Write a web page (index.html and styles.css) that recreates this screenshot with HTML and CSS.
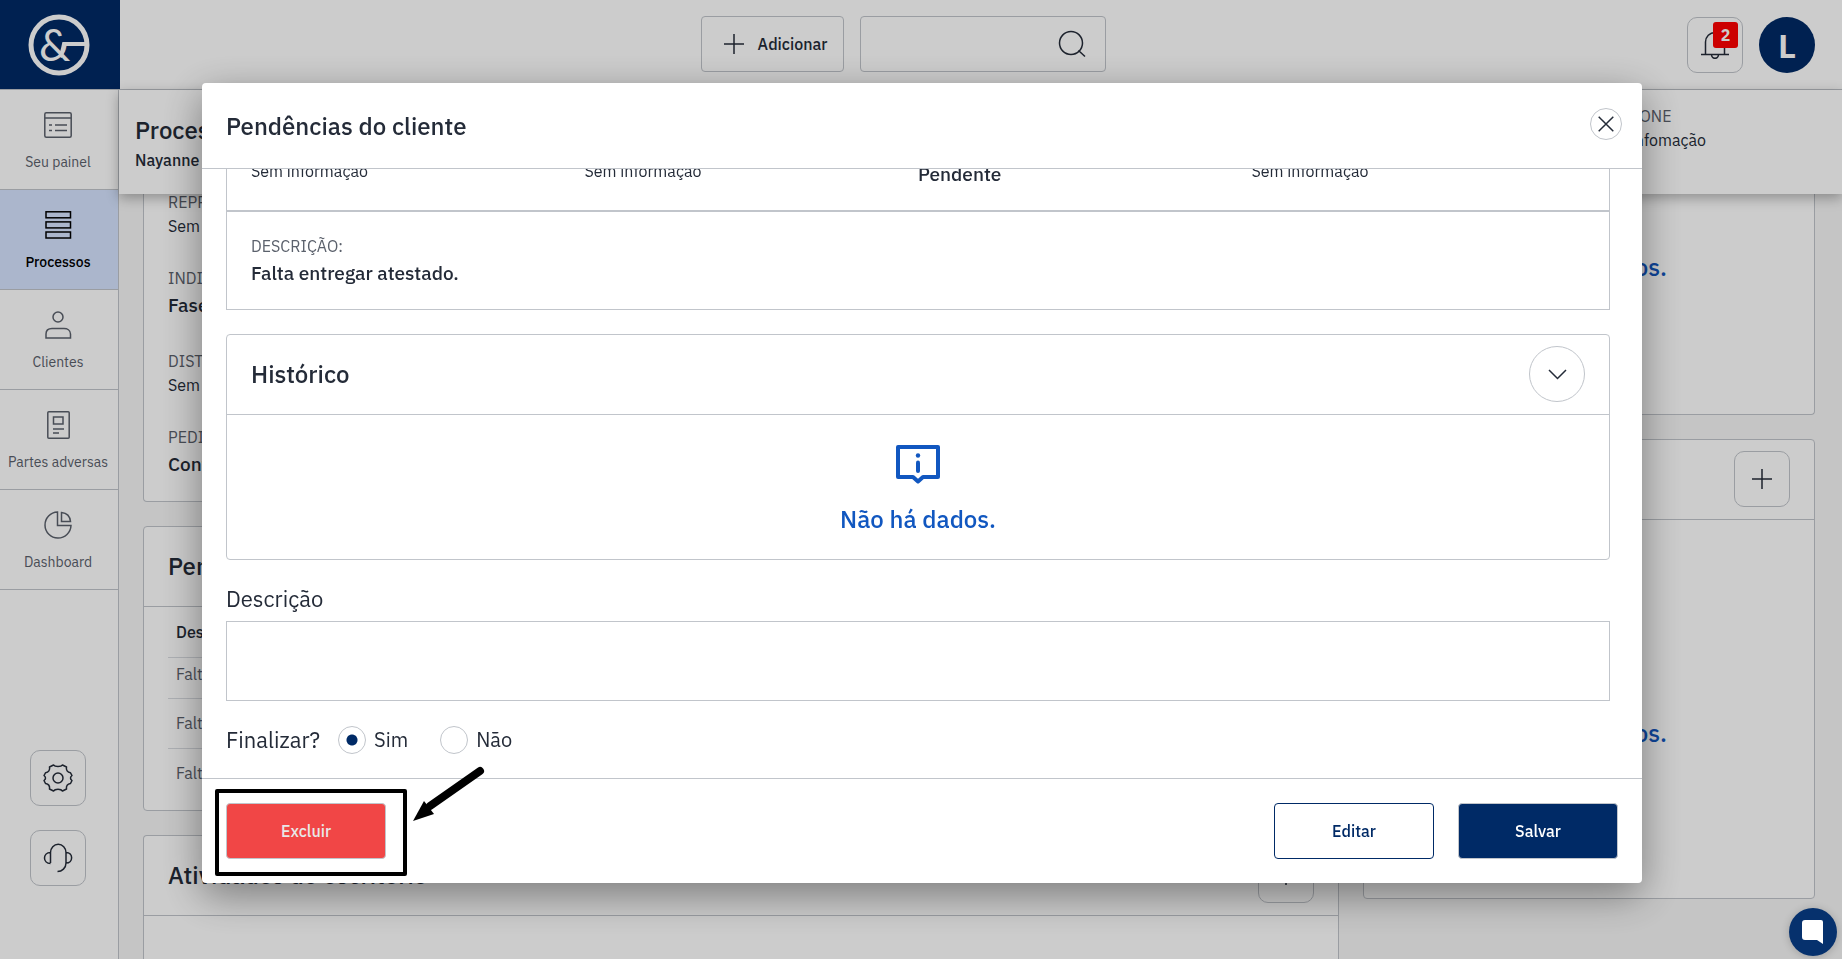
FILE: index.html
```html
<!DOCTYPE html>
<html lang="pt-BR">
<head>
<meta charset="utf-8">
<meta name="viewport" content="width=device-width, initial-scale=1">
<title>Pendências do cliente</title>
<link rel="stylesheet" href="styles.css">
</head>
<body>
<div class="app">
  <header class="topbar">
    <a class="logo" href="#" aria-label="Início">
      <svg width="62" height="62" viewBox="0 0 62 62" fill="none" stroke="#fff">
        <circle cx="31" cy="31" r="28" stroke-width="5"/>
        <path d="M32 43C35 38 35 34 36 30H57" stroke-width="4"/>
        <text class="logo-mark" x="11" y="47" fill="#fff" stroke="none">&amp;</text>
      </svg>
    </a>
    <div class="topbar-center">
      <button class="add-button" type="button">
        <svg width="20" height="20" viewBox="0 0 20 20" stroke="currentColor" stroke-width="1.5"><path d="M10 0V20M0 10H20"/></svg>
        Adicionar
      </button>
      <div class="search">
        <input type="search" aria-label="Pesquisar">
        <svg width="28" height="28" viewBox="0 0 28 28" fill="none" stroke="currentColor" stroke-width="1.5"><circle cx="13" cy="13" r="11.5"/><path d="M20.500 20.500L27 26.500"/></svg>
      </div>
    </div>
    <div class="topbar-user">
      <button class="icon-button bell" type="button" aria-label="Notificações">
        <svg width="28" height="28" viewBox="0 0 28 28" fill="none" stroke="currentColor" stroke-width="1.500"><path d="M0 23.500H28M4.500 23.500V11a9.500 9.500 0 0 1 19 0V23.500M10.500 23.500a3.500 3.800 0 0 0 7 0"/></svg>
        <span class="badge">2</span>
      </button>
      <div class="avatar">L</div>
    </div>
  </header>

  <div class="workspace">
    <nav class="sidebar">
      <a class="nav-item" href="#">
        <svg width="28" height="28" viewBox="0 0 28 28" fill="none" stroke="currentColor" stroke-width="1.500"><rect x=".8" y="1.800" width="26.400" height="24.400" rx="1.500"/><path d="M1 7H27M5 14H8M11 14H23M5 19.500H8M11 19.500H23"/></svg>
        Seu painel
      </a>
      <a class="nav-item active" href="#">
        <svg width="28" height="28" viewBox="0 0 28 28" fill="none" stroke="currentColor" stroke-width="1.500"><rect x="2" y=".8" width="24.500" height="6"/><rect x="2" y="10.900" width="24.500" height="6"/><rect x="2" y="21" width="24.500" height="6"/></svg>
        Processos
      </a>
      <a class="nav-item" href="#">
        <svg width="28" height="28" viewBox="0 0 28 28" fill="none" stroke="currentColor" stroke-width="1.500"><circle cx="14" cy="6" r="5"/><path d="M2 27V23C2 19 5 17.500 8 17.500H20C23 17.500 26.500 19 26.500 23V27Z"/></svg>
        Clientes
      </a>
      <a class="nav-item" href="#">
        <svg width="28" height="28" viewBox="0 0 28 28" fill="none" stroke="currentColor" stroke-width="1.500"><rect x="3.800" y=".8" width="21.400" height="26.400" rx="1"/><rect x="9.500" y="6" width="9.500" height="7"/><path d="M9 18H20M9 22H15"/></svg>
        Partes adversas
      </a>
      <a class="nav-item" href="#">
        <svg width="28" height="28" viewBox="0 0 28 28" fill="none" stroke="currentColor" stroke-width="1.500"><path d="M13.500 1A13 13 0 1 0 27 14.500H13.500ZM17.500 1.500V10.500H26.500C26 5.500 22.500 2 17.500 1.500Z"/></svg>
        Dashboard
      </a>
      <div class="sidebar-tools">
        <button class="icon-button" type="button" aria-label="Configurações">
          <svg width="30" height="30" viewBox="0 0 30 30" fill="none" stroke="currentColor" stroke-width="1.500"><circle cx="15" cy="15" r="5"/><path d="M10.500 2C12 4 18 4 19.500 2L23.500 4C22.800 7 24.500 9.500 27.500 9.800L29 12.500C27 14 27 16 29 17.500L27.500 20.500C24.500 21 23 23 23.500 26L19.500 28C18 25.500 12 25.500 10.500 28L6.500 26C7 23 5.500 21 2.500 20.500L1 17.500C3 16 3 14 1 12.500L2.500 9.800C5.500 9.500 7.200 7 6.500 4Z" stroke-linejoin="round"/></svg>
        </button>
        <button class="icon-button" type="button" aria-label="Suporte">
          <svg width="30" height="30" viewBox="0 0 30 30" fill="none" stroke="currentColor" stroke-width="1.500"><path d="M7.500 20V9.500A7.500 8 0 0 1 23 9.500V20C23 25 19 28.500 14.500 28.500M7.500 9.500C-.5 9.500-.5 20.500 7.500 20.500M23 9.500C30.500 9.500 30.500 20 23 20"/></svg>
        </button>
      </div>
    </nav>

    <main class="page">
      <div class="page-head">
        <div>
          <h1>Processos</h1>
          <p class="page-client">Nayanne</p>
        </div>
        <dl class="page-contact">
          <dt>TELEFONE</dt>
          <dd>Sem infomação</dd>
        </dl>
      </div>
      <div class="columns">
        <div class="column">
          <section class="card card-cut details">
            <dl><dt>REPRESENTANTE</dt><dd>Sem infomação</dd></dl>
            <dl><dt>INDICAÇÃO</dt><dd class="strong">Fase</dd></dl>
            <dl><dt>DISTRIBUIÇÃO</dt><dd>Sem infomação</dd></dl>
            <dl><dt>PEDIDO</dt><dd class="strong">Conta</dd></dl>
          </section>
          <section class="card">
            <div class="card-head"><h2>Pendências</h2></div>
            <div class="table-wrap">
              <table class="table">
                <thead><tr><th>Descrição</th></tr></thead>
                <tbody>
                  <tr><td>Falta</td></tr>
                  <tr><td>Falta</td></tr>
                  <tr><td>Falta</td></tr>
                </tbody>
              </table>
            </div>
          </section>
          <section class="card card-grow">
            <div class="card-head">
              <h2>Atividades do escritório</h2>
              <button class="icon-button" type="button" aria-label="Adicionar atividade">
                <svg width="20" height="20" viewBox="0 0 20 20" stroke="currentColor" stroke-width="1.500"><path d="M10 0V20M0 10H20"/></svg>
              </button>
            </div>
          </section>
        </div>
        <div class="column">
          <section class="card card-cut empty-first"><p class="empty-text">Não há dados.</p></section>
          <section class="card">
            <div class="card-head">
              <button class="icon-button" type="button" aria-label="Adicionar item">
                <svg width="20" height="20" viewBox="0 0 20 20" stroke="currentColor" stroke-width="1.500"><path d="M10 0V20M0 10H20"/></svg>
              </button>
            </div>
            <div class="empty-second"><p class="empty-text">Não há dados.</p></div>
          </section>
        </div>
      </div>
    </main>
  </div>
</div>

<div class="overlay">
  <div class="modal" role="dialog" aria-modal="true" aria-labelledby="modal-title">
    <header class="modal-head">
      <h2 id="modal-title">Pendências do cliente</h2>
      <button class="close" type="button" aria-label="Fechar">
        <svg width="16" height="16" viewBox="0 0 16 16" stroke="currentColor" stroke-width="1.500"><path d="M.7.7L15.300 15.300M15.300.7L.7 15.300"/></svg>
      </button>
    </header>
    <div class="modal-body">
      <div class="info-row">
        <span>Sem informação</span>
        <span>Sem informação</span>
        <span class="strong">Pendente</span>
        <span>Sem informação</span>
      </div>
      <dl class="info-description">
        <dt>DESCRIÇÃO:</dt>
        <dd>Falta entregar atestado.</dd>
      </dl>
      <section class="card history">
        <div class="card-head">
          <h3>Histórico</h3>
          <button class="icon-button round" type="button" aria-label="Recolher">
            <svg width="20" height="20" viewBox="0 0 20 20" fill="none" stroke="currentColor" stroke-width="1.500"><path d="M2 6L10.500 14.500L19 6"/></svg>
          </button>
        </div>
        <div class="history-empty">
          <svg width="44" height="40" viewBox="0 0 44 40" fill="none" stroke="currentColor" stroke-width="4" stroke-linejoin="round"><path d="M2 2H42V32H27L22 36.500L17 32H2Z"/><path d="M22 17.500V26" stroke-linecap="round"/><circle cx="22" cy="10.500" r="2.200" fill="currentColor" stroke="none"/></svg>
          <p class="empty-text">Não há dados.</p>
        </div>
      </section>
      <label class="field-label" for="descricao">Descrição</label>
      <textarea class="field" id="descricao"></textarea>
      <div class="finish" role="radiogroup" aria-labelledby="finish-label">
        <span class="finish-label" id="finish-label">Finalizar?</span>
        <label class="option"><input type="radio" name="finalizar" checked>Sim</label>
        <label class="option"><input type="radio" name="finalizar">Não</label>
      </div>
    </div>
    <footer class="modal-foot">
      <div class="delete-area">
        <button class="action danger" type="button">Excluir</button>
        <span class="highlight"></span>
        <svg class="arrow" width="74" height="58" viewBox="0 0 74 58"><path d="M68 7L18 42" stroke="#000" stroke-width="8" stroke-linecap="round"/><path d="M1 57L12 37L22 50Z"/></svg>
      </div>
      <div class="foot-actions">
        <button class="action outline" type="button">Editar</button>
        <button class="action primary" type="button">Salvar</button>
      </div>
    </footer>
  </div>
</div>

<button class="chat" type="button" aria-label="Abrir chat">
  <svg width="22" height="24" viewBox="0 0 22 24" fill="#fff"><path d="M3 0H19Q21 0 21 2V24L15 20H3Q0 20 0 17V3Q0 0 3 0Z"/></svg>
</button>
</body>
</html>
```
FILE: styles.css
```css
:root {
  --ink: #242b38;
  --muted: #5b616c;
  --line: #c1c5cb;
  --navy: #002a66;
  --blue: #1157c0;
}

* { box-sizing: border-box; }

body {
  margin: 0;
  color: var(--ink);
  font: 16px/24px "IBM Plex Sans", Roboto, sans-serif;
  overflow: hidden;
}

h1, h2, h3, p, dl, dd { margin: 0; }

h1, h2, h3 {
  font-size: 24px;
  font-weight: 500;
  line-height: 32px;
}

a { color: inherit; text-decoration: none; }

button {
  padding: 0;
  color: inherit;
  font: inherit;
  background: #fff;
  border: 1px solid var(--line);
}

svg { display: block; flex: none; }

.app {
  display: flex;
  flex-direction: column;
  height: 100vh;
  background: #f7f7f7;
}

.topbar {
  display: flex;
  flex: none;
  height: 90px;
  background: #fff;
  border-bottom: 1px solid var(--line);
}

.logo {
  display: grid;
  place-items: center;
  width: 120px;
  padding-right: 3px;
  background: var(--navy);
}

.logo-mark { font: 44px Lato, sans-serif; }

.topbar-center {
  display: flex;
  flex: 1;
  gap: 16px;
  justify-content: center;
  align-items: center;
  padding-bottom: 2px;
}

.add-button {
  display: flex;
  gap: 14px;
  align-items: center;
  height: 56px;
  padding: 0 16px 0 22px;
  font-weight: 500;
  border-radius: 4px;
}

.search {
  display: flex;
  align-items: center;
  width: 246px;
  height: 56px;
  padding-right: 19px;
  border: 1px solid var(--line);
  border-radius: 4px;
}

.search input {
  flex: 1;
  min-width: 0;
  height: 100%;
  padding: 0 16px;
  font: inherit;
  background: none;
  border: 0;
}

.topbar-user {
  display: flex;
  gap: 16px;
  align-items: center;
  padding-right: 27px;
}

.icon-button {
  position: relative;
  display: grid;
  flex: none;
  place-items: center;
  width: 56px;
  height: 56px;
  background: none;
  border-radius: 10px;
}

.round { border-radius: 50%; }

.badge {
  position: absolute;
  top: 4px;
  right: 4px;
  width: 25px;
  color: #fff;
  font-weight: 700;
  line-height: 26px;
  text-align: center;
  background: #f00;
  border-radius: 3px;
}

.avatar {
  width: 56px;
  height: 56px;
  color: #fff;
  font: 700 32px/58px "Noto Sans", sans-serif;
  text-align: center;
  background: var(--navy);
  border-radius: 50%;
}

.workspace {
  display: flex;
  flex: 1;
  min-height: 0;
}

.sidebar {
  display: flex;
  flex: none;
  flex-direction: column;
  width: 119px;
  background: #fff;
  border-right: 1px solid var(--line);
}

.nav-item {
  display: flex;
  flex-direction: column;
  gap: 11px;
  align-items: center;
  height: 100px;
  padding: 21px 2px 0 0;
  color: var(--muted);
  font-size: 14px;
  border-bottom: 1px solid var(--line);
}

.nav-item.active {
  color: #000;
  font-weight: 500;
  background: #d6e4ff;
}

.sidebar-tools {
  display: grid;
  gap: 24px;
  justify-content: center;
  margin-top: auto;
  padding: 0 2px 73px 0;
}

.page {
  display: flex;
  flex: 1;
  flex-direction: column;
  min-width: 0;
}

.page-head {
  position: relative;
  display: flex;
  flex: none;
  justify-content: space-between;
  height: 104px;
  padding: 14px 27px 0 16px;
  background: #fff;
  box-shadow: 0 4px 12px rgba(0, 0, 0, .3);
  z-index: 1;
}

.page-head h1 { padding: 10px 0 2px; }
.page-client { font-weight: 500; }
.page-contact { width: 220px; }

dt { color: var(--muted); }

.columns {
  display: grid;
  flex: 1;
  grid-template-columns: minmax(0, 1196fr) minmax(0, 452fr);
  gap: 24px;
  min-height: 0;
  padding: 0 27px 0 24px;
}

.column {
  display: flex;
  flex-direction: column;
  gap: 24px;
  min-height: 0;
}

.card {
  flex: none;
  background: #fff;
  border: 1px solid var(--line);
  border-radius: 4px;
}

.card-cut {
  border-top: 0;
  border-radius: 0 0 4px 4px;
}

.card-grow {
  flex: 1;
  border-bottom: 0;
  border-radius: 4px 4px 0 0;
}

.card-head {
  display: flex;
  gap: 24px;
  align-items: center;
  height: 80px;
  padding: 0 24px 2px;
  border-bottom: 1px solid var(--line);
}

.card-head .icon-button { margin-left: auto; }

.details {
  display: grid;
  gap: 28px;
  margin-top: -4px;
  padding: 0 24px 21px;
}

.strong, .info-description dd {
  font-size: 19px;
  font-weight: 500;
  line-height: 31px;
}

.table-wrap { padding: 0 24px 12px; }

.table {
  width: 100%;
  border-collapse: collapse;
}

.table th, .table td {
  height: 50px;
  padding: 0 8px;
  text-align: left;
  border-bottom: 1px solid #d9dce1;
}

.table th { font-weight: 500; }
.table td { color: var(--muted); }
.table tr:last-child td { border-bottom: 0; }
.table thead th { border-bottom: 1px solid #d9dce1; }

.table tbody tr:first-child td {
  height: 41px;
  padding-bottom: 8px;
}

.empty-text {
  color: var(--blue);
  font-size: 24px;
  font-weight: 500;
  line-height: 32px;
  text-align: center;
}

.empty-first { padding: 57px 24px 131px; }
.empty-second { padding: 197px 24px 149px; }

.overlay {
  position: fixed;
  inset: 0;
  z-index: 2;
  display: grid;
  place-items: center;
  padding: 15px 8px 8px 10px;
  background: rgba(0, 0, 0, .2);
}

.modal {
  display: flex;
  flex-direction: column;
  width: 100%;
  max-width: 1440px;
  height: 800px;
  max-height: 100%;
  background: #fff;
  border-radius: 4px;
  box-shadow: 0 12px 40px rgba(0, 0, 0, .4);
}

.modal-head {
  display: flex;
  flex: none;
  justify-content: space-between;
  align-items: center;
  height: 86px;
  padding: 0 20px 0 24px;
  border-bottom: 1px solid var(--line);
}

.close {
  display: grid;
  place-items: center;
  width: 32px;
  height: 32px;
  margin-bottom: 4px;
  border-radius: 50%;
}

.modal-body {
  display: flex;
  flex: 1;
  flex-direction: column;
  justify-content: flex-end;
  min-height: 0;
  padding: 0 32px 24px 24px;
  overflow: hidden;
}

.info-row {
  display: grid;
  flex: none;
  grid-template-columns: repeat(4, 1fr);
  padding: 24px 24px 20px;
  border: 1px solid var(--line);
}

.info-description {
  flex: none;
  margin-bottom: 24px;
  padding: 22px 24px 20px;
  border: 1px solid var(--line);
}

.history-empty {
  display: grid;
  gap: 18px;
  justify-items: center;
  padding: 30px 24px 24px;
  color: var(--blue);
}

.field-label {
  margin-top: 23px;
  padding-bottom: 6px;
  font-size: 22px;
  line-height: 32px;
}

.field {
  display: block;
  flex: none;
  width: 100%;
  height: 80px;
  padding: 12px;
  font: inherit;
  border: 1px solid var(--line);
  resize: none;
}

.finish {
  display: flex;
  align-items: center;
  margin-top: 25px;
  font-size: 20px;
  line-height: 28px;
}

.finish-label {
  margin-right: 18px;
  font-size: 22px;
}

.option {
  display: flex;
  gap: 8px;
  align-items: center;
  margin-right: 32px;
}

.option input {
  width: 28px;
  height: 28px;
  margin: 0;
  background: #fff;
  border: 1px solid var(--line);
  border-radius: 50%;
  appearance: none;
}

.option input:checked {
  background: radial-gradient(circle, var(--navy) 5px, #fff 6px);
}

.modal-foot {
  display: flex;
  flex: none;
  justify-content: space-between;
  padding: 24px;
  border-top: 1px solid var(--line);
}

.delete-area { position: relative; }

.foot-actions {
  display: flex;
  gap: 24px;
}

.action {
  display: block;
  width: 160px;
  height: 56px;
  font-weight: 500;
  border-radius: 4px;
}

.danger {
  color: #e8e8e8;
  background: #f14646;
}

.outline {
  color: var(--navy);
  border-color: var(--navy);
}

.primary {
  color: #fff;
  background: var(--navy);
}

.highlight {
  position: absolute;
  inset: -14px -21px -17px -11px;
  border: 4px solid #000;
  border-radius: 2px;
  pointer-events: none;
}

.arrow {
  position: absolute;
  top: -39px;
  left: 186px;
}

.chat {
  position: fixed;
  right: 5px;
  bottom: 3px;
  z-index: 3;
  display: grid;
  place-items: center;
  width: 48px;
  height: 48px;
  background: #06316d;
  border: 0;
  border-radius: 50%;
  box-shadow: 0 1px 8px rgba(0, 0, 0, .2);
}
```
